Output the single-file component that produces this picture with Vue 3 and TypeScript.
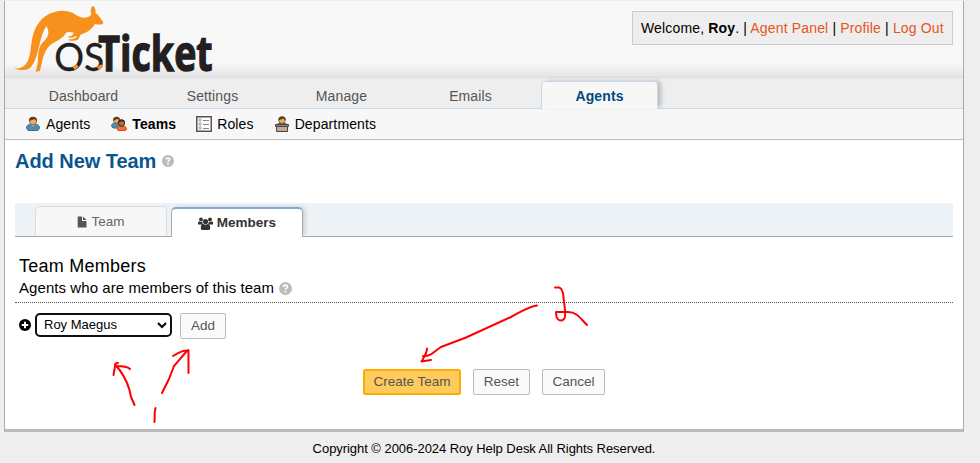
<script setup lang="ts">
import { ref } from 'vue'

interface NavTab { label: string; active?: boolean }
interface SubItem { label: string; icon: 'agent' | 'teams' | 'roles' | 'dept'; active?: boolean }

const tabs: NavTab[] = [
  { label: 'Dashboard' },
  { label: 'Settings' },
  { label: 'Manage' },
  { label: 'Emails' },
  { label: 'Agents', active: true },
]
const subItems: SubItem[] = [
  { label: 'Agents', icon: 'agent' },
  { label: 'Teams', icon: 'teams', active: true },
  { label: 'Roles', icon: 'roles' },
  { label: 'Departments', icon: 'dept' },
]
const member = ref('Roy Maegus')
</script>

<template>
  <div class="page">
    <div class="container">
      <header class="header">
        <svg class="logo" width="205" height="74" viewBox="30 6 615 222">
          <path fill="#f8901e" d="M43 204C60 209 74 200 83 184C94 160 92 124 101 98C116 54 150 32 190 32C222 33 234 54 254 53C268 52 272 46 274 42C270 32 272 22 279 17C286 23 288 31 286 38C296 44 300 54 310 66C310 75 300 75 285 72C278 84 270 92 256 98C248 101 243 102 241 105L236 116C232 122 220 122 208 122L206 118C218 118 226 116 230 110L228 107L218 113L206 113V109C214 109 220 104 221 98C212 96 203 95 198 98C190 116 166 124 152 134C138 146 132 162 127 182L120 212L107 216C110 204 113 194 114 180C114 158 117 142 126 130C141 116 148 104 144 90L140 78C131 88 125 108 119 132C110 168 104 196 86 206C72 213 54 211 43 204Z" />
          <text x="163" y="212" class="logo-thin" textLength="150" lengthAdjust="spacingAndGlyphs">OS</text>
          <text x="295" y="213" class="logo-bold" textLength="343" lengthAdjust="spacingAndGlyphs">Ticket</text>
          <path stroke="#f8901e" stroke-width="10" d="M221 206L233 197M294 206L306 197" />
        </svg>
        <div class="welcome">Welcome, <strong>Roy</strong>. | <a>Agent Panel</a> | <a>Profile</a> | <a>Log Out</a></div>
      </header>

      <nav class="nav">
        <div v-for="t in tabs" :key="t.label" class="nav-tab" :class="{ active: t.active }">{{ t.label }}</div>
      </nav>

      <nav class="subnav">
        <div v-for="s in subItems" :key="s.label" class="sub" :class="[s.icon, { current: s.active }]">
          <svg v-if="s.icon === 'agent'" width="16" height="16" viewBox="0 0 16 16">
            <path d="M1.500 12C1.500 9 4 8 8 8S14.500 9 14.500 12L13 14.500H3Z" fill="#4e8db0" stroke="#3d7391" />
            <path d="M6 8L8 10.500L10 8Z" fill="#e9b07a" />
            <circle cx="8" cy="5" r="3.700" fill="#e9ad72" stroke="#8a5a30" stroke-width=".8" />
            <path d="M4 5C4 2 5.500 .7 8 .7S12 2 12 5C10.500 4.500 10 3.500 9 3C7.500 4.500 6 4 4 5Z" fill="#6b3d12" />
          </svg>
          <svg v-else-if="s.icon === 'teams'" width="16" height="16" viewBox="0 0 16 16">
            <path d="M.5 10C.5 7.500 3 7 5.500 7S9 9 9 12H2Z" fill="#4e8db0" stroke="#3d7391" />
            <circle cx="5.500" cy="4.300" r="3" fill="#e9ad72" stroke="#7a4a20" stroke-width=".8" />
            <path d="M2 5C2 2 3.300 .8 5.500 .8S9 2 9 4L6 3Z" fill="#6b3d12" />
            <path d="M6 13C6 10.500 8 10 10.500 10S15.500 10.500 15.500 13L14.500 14.500H7Z" fill="#f36f35" stroke="#c9501f" />
            <circle cx="10.500" cy="7" r="3.200" fill="#a47447" stroke="#432b1a" />
            <path d="M7 7C7 4.500 8 3.500 10.500 3.500S14 5 14 7L11 5Z" fill="#432b1a" />
          </svg>
          <svg v-else-if="s.icon === 'roles'" width="16" height="16" viewBox="0 0 16 16">
            <rect x=".75" y=".75" width="14.500" height="14.500" fill="#fff" stroke="#555" stroke-width="1.500" />
            <path d="M7 4.500H13M7 8.500H13M7 12.500H13" stroke="#888" />
            <g fill="#eee" stroke="#999" stroke-width=".8"><circle cx="4" cy="4" r="1.300" /><circle cx="4" cy="8" r="1.300" /><circle cx="4" cy="12" r="1.300" /></g>
          </svg>
          <svg v-else width="16" height="16" viewBox="0 0 16 16">
            <path d="M3 8.500C4 7 12 7 13 8.500Z" fill="#4e8db0" stroke="#2e5870" />
            <circle cx="8" cy="4.300" r="3.200" fill="#e9ad72" stroke="#7a4a20" stroke-width=".8" />
            <path d="M4.300 4.500C4.300 1.500 6 .3 8 .3S12 1.500 12 4.500L9 2.800Z" fill="#6b3d12" />
            <path d="M2.500 10.500H13.500V15.500H2.500Z" fill="#c8a890" stroke="#4b4542" />
            <path d="M1.500 8.500H14.500V10.500H1.500Z" fill="#8b8583" stroke="#4b4542" />
          </svg>
          <span>{{ s.label }}</span>
        </div>
      </nav>

      <main class="content">
        <h2>
          <span>Add New Team</span>
          <svg class="help" width="12" height="12" viewBox="0 0 12 12"><circle cx="6" cy="6" r="6" fill="#bbb" /><path d="M4.200 4.600C4.300 2.400 7.900 2.500 7.800 4.600C7.700 5.700 6 5.800 6 7.200M6 8.200V9.800" fill="none" stroke="#fff" stroke-width="1.600" /></svg>
        </h2>

        <div class="form-tabs">
          <div class="ftab">
            <svg width="10" height="12" viewBox="0 0 10 12"><path fill="#555" d="M.7 .5H5V5H9.500V11.500H.7Z" /><path fill="#555" d="M6 .5L9.500 4H6Z" /></svg>
            <span>Team</span>
          </div>
          <div class="ftab on">
            <svg width="15" height="13" viewBox="0 0 15 13" fill="#333">
              <circle cx="3" cy="2.400" r="1.900" /><circle cx="12" cy="2.400" r="1.900" /><circle cx="7.500" cy="4.600" r="2.600" />
              <path d="M0 7.500V5.800C0 4.300 1 4.300 2 4.700H4.300C4.200 6 4.700 6.800 5.300 7.500ZM15 7.500V5.800C15 4.300 14 4.300 13 4.700H10.700C10.800 6 10.300 6.800 9.700 7.500ZM2.800 11C2.800 8.500 3.500 7 5.200 7C6.800 8 8.200 8 9.800 7C11.500 7 12.200 8.500 12.200 11C12.200 12.400 11.500 13 10.500 13H4.500C3.500 13 2.800 12.400 2.800 11Z" />
            </svg>
            <span>Members</span>
          </div>
        </div>

        <section class="intro">
          <h3>Team Members</h3>
          <p>
            <span>Agents who are members of this team</span>
            <svg class="help" width="13" height="13" viewBox="0 0 12 12"><circle cx="6" cy="6" r="6" fill="#bbb" /><path d="M4.200 4.600C4.300 2.400 7.900 2.500 7.800 4.600C7.700 5.700 6 5.800 6 7.200M6 8.200V9.800" fill="none" stroke="#fff" stroke-width="1.600" /></svg>
          </p>
        </section>

        <div class="add-row">
          <svg class="plus" width="12" height="12" viewBox="0 0 12 12"><circle cx="6" cy="6" r="6" /><path d="M6 2.700V9.300M2.700 6H9.300" stroke="#fff" stroke-width="2" /></svg>
          <div class="select" tabindex="0">
            <span>{{ member }}</span>
            <svg width="10" height="7" viewBox="0 0 10 7"><path d="M1 1L5 5L9 1" fill="none" stroke="#000" stroke-width="2" /></svg>
          </div>
          <button class="btn add" type="button">Add</button>
        </div>

        <div class="actions">
          <button class="btn save" type="button">Create Team</button>
          <button class="btn reset" type="button">Reset</button>
          <button class="btn cancel" type="button">Cancel</button>
        </div>
      </main>
    </div>
    <footer><span>Copyright © 2006-2024 Roy Help Desk All Rights Reserved.</span></footer>

    <svg class="ink" width="980" height="463" viewBox="0 0 980 463">
      <path d="M134.500 405L131 397L129.500 390C126 378 122 372 115 364.500M113.500 375L115.500 363.500L118 363M116 366C121 366 127 366 130 369" />
      <path d="M162 393L169 379L174 366C180 359 184 354 188 350M173 356C179 352 183 350 188.500 350.500V373" />
      <path d="M155.500 408C154 413 155 417 154.500 422" />
      <path d="M537 305.500C530 306 522 311 511 317L466 337.500L441 347C434 351 431 357 423 356M427 348.500C427 353 424 357 421.500 361.500L431 360" />
      <path d="M555 287.500H559C562 288 563 291 563.500 297C564 305 567 316 564 319C561 322 556 321 556 312H568C577 312 580 318 587 325" />
    </svg>
  </div>
</template>

<style>
body { background: #eee; }
</style>

<style scoped>
* { box-sizing: border-box; }
.page {
  position: relative;
  width: 980px;
  height: 463px;
  padding: 1px 0 0 4px;
  overflow: hidden;
  background: #eee;
  color: #000;
  font: 14px/20px "Liberation Sans", Arial, sans-serif;
}
.container {
  width: 960px;
  height: 431px;
  background: #fff;
  border: 1px solid #aaa;
  border-top: 0;
  border-bottom: 3px solid #bbb;
}
.header {
  display: flex;
  justify-content: space-between;
  align-items: flex-start;
  height: 77px;
  padding: 1px 10px 0 5px;
  border-bottom: 1px solid #ddd;
  background: linear-gradient(#f8f8f8 0, #f8f8f8 62px, #e3e3e3 76px);
}
.logo { display: block; overflow: visible; }
.logo-thin { font: 400 114px Lato, sans-serif; fill: #231f20; stroke: #231f20; stroke-width: 1; }
.logo-bold { font: 700 146px "Open Sans", sans-serif; fill: #231f20; stroke: #231f20; stroke-width: 4; }
.welcome {
  width: 321px;
  height: 34px;
  margin-top: 9px;
  padding-left: 8px;
  border: 1px solid #ccc;
  background: #eee;
  line-height: 33px;
  letter-spacing: .155px;
  white-space: nowrap;
}
.welcome a { color: #e65524; }
.nav {
  display: flex;
  height: 31px;
  padding: 3px 0 0 20px;
  border-bottom: 1px solid #c5d9ec;
  background: #eee;
}
.nav-tab {
  width: 117px;
  margin-right: 12px;
  color: #555;
  line-height: 31px;
  letter-spacing: .12px;
  text-align: center;
}
.nav-tab.active {
  height: 28px;
  border: 1px solid #c5d9ec;
  border-bottom: 0;
  border-radius: 4px 4px 0 0;
  background: #f7f7f7;
  box-shadow: 4px -1px 4px -1px #bbb;
  clip-path: inset(-4px -9px -1px -2px);
  color: #004a80;
  font-weight: bold;
  line-height: 29px;
}
.subnav {
  display: flex;
  align-items: center;
  height: 31px;
  padding-left: 20px;
  border-bottom: 1px solid #bbb;
  background: #f7f7f7;
  letter-spacing: .12px;
}
.sub { display: flex; align-items: center; gap: 5px; margin-right: 20px; }
.sub.agent { margin-right: 21px; }
.sub.current { font-weight: bold; }
.content { padding: 10px 10px 0; }
h2 {
  display: flex;
  align-items: center;
  gap: 6px;
  height: 22px;
  margin: 0;
  color: #0a568e;
  font-size: 20px;
  letter-spacing: -.05px;
}
.form-tabs {
  display: flex;
  align-items: flex-end;
  height: 34px;
  margin-top: 31px;
  padding-left: 20px;
  border-bottom: 1px solid #aaa;
  background: #edf2f7;
}
.ftab {
  display: flex;
  align-items: center;
  justify-content: center;
  gap: 4px;
  width: 132px;
  height: 30px;
  margin-right: 4px;
  border: 1px solid #ddd;
  border-bottom: 0;
  border-radius: 5px 5px 0 0;
  background: #f7f7f7;
  color: #666;
  font-size: 13.500px;
}
.ftab.on {
  height: 30px;
  margin-bottom: -1px;
  border: 1px solid #aaa;
  border-top: 2px solid #83a8d6;
  border-bottom: 0;
  background: #fff;
  box-shadow: 3px -1px 4px -1px #ccc;
  clip-path: inset(-4px -8px 0 -4px);
  color: #333;
  font-weight: bold;
}
.intro { height: 66px; padding: 18px 4px 0; border-bottom: 1px dotted #555; }
h3 { margin: 0; font-size: 18px; font-weight: normal; line-height: 22px; letter-spacing: .25px; }
p { display: flex; align-items: center; gap: 5px; margin: 1px 0 0; font-size: 15px; line-height: 20px; letter-spacing: .07px; }
.add-row { display: flex; align-items: center; margin-top: 10px; padding-left: 4px; height: 26px; }
.plus { margin-bottom: 3px; }
.select {
  display: flex;
  align-items: center;
  justify-content: space-between;
  width: 137px;
  height: 24px;
  margin: 0 8px 2px 4px;
  padding: 0 3px 0 7px;
  border: 2px solid #101010;
  border-radius: 5px;
  outline: 0;
  font-size: 13px;
}
.btn {
  height: 26px;
  padding: 0;
  border: 1px solid #bbb;
  border-radius: 2px;
  background: #fafafa;
  color: #555;
  font: 13.500px/22px "Liberation Sans", Arial, sans-serif;
  white-space: nowrap;
}
.add { width: 46px; }
.actions { display: flex; gap: 12px; margin: 30px 0 0 348px; }
.save { width: 98px; border: 2px solid #ffab00; background: #ffcb5c; }
.reset { width: 57px; }
.cancel { width: 63px; }
footer { width: 960px; padding-top: 7px; font-size: 13px; letter-spacing: -.05px; text-align: center; }
.ink {
  position: absolute;
  top: 0;
  left: 0;
  fill: none;
  stroke: #f00;
  stroke-width: 2;
  stroke-linecap: round;
  stroke-linejoin: round;
  pointer-events: none;
}
</style>
